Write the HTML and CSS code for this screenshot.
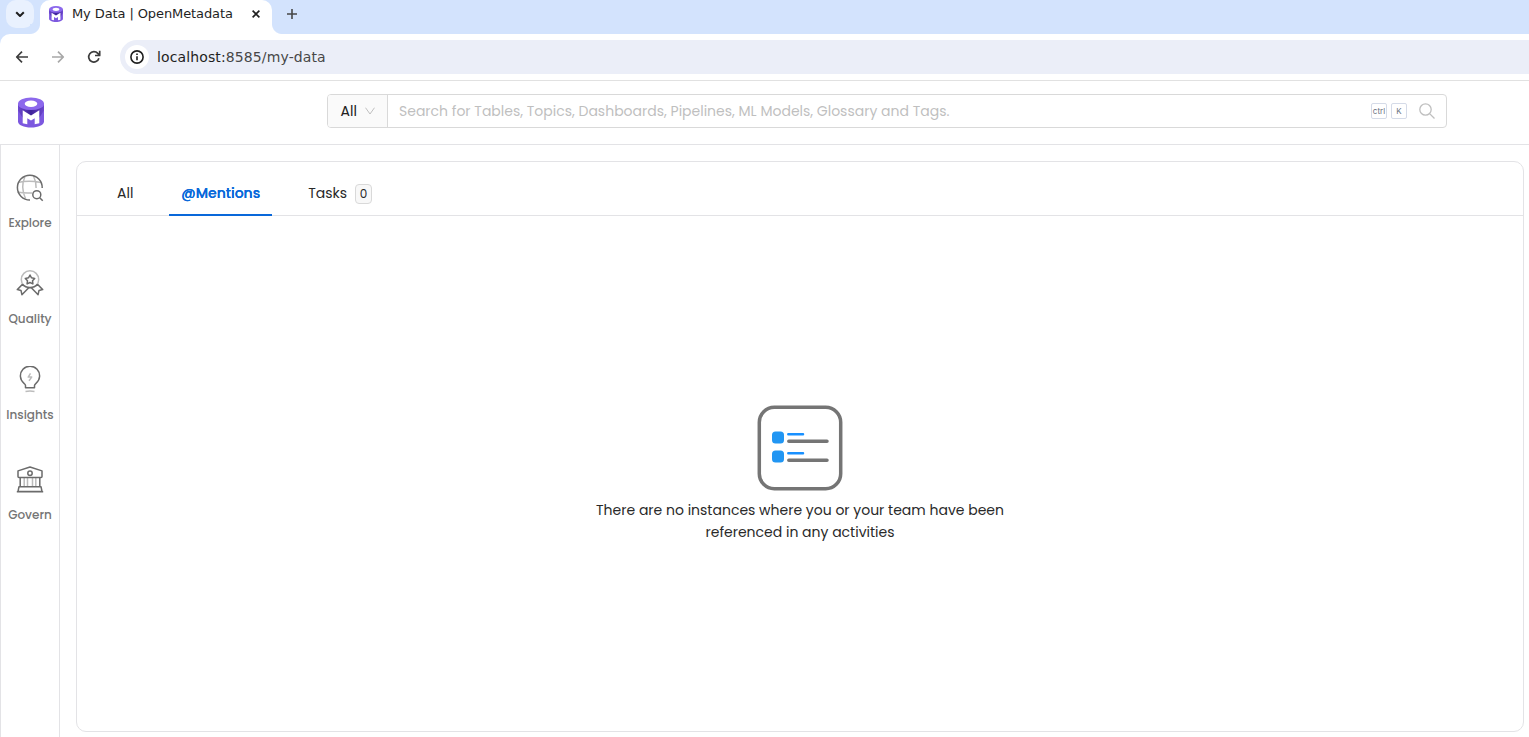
FILE: index.html
```html
<!DOCTYPE html>
<html lang="en">

<head>
    <meta charset="UTF-8">
    <meta name="viewport" content="width=device-width, initial-scale=1.0">
    <title>My Data | OpenMetadata</title>
    <link rel="stylesheet" href="styles.css">
</head>

<body>
    <!-- shared logo -->
    <svg class="defs" width="0" height="0">
        <defs>
            <linearGradient id="logo-side" x1="0" y1="0" x2="1" y2="0">
                <stop offset="0" stop-color="#6d48cf" />
                <stop offset="0.5" stop-color="#3f2299" />
                <stop offset="1" stop-color="#6d48cf" />
            </linearGradient>
            <symbol id="logo" viewBox="0 0 26 30">
                <path d="M0 6v18c0 3.500 5.800 6 13 6s13-2.500 13-6V6z" fill="#7c58df" />
                <path d="M0 8v5l4.500 7h17L26 13V8z" fill="url(#logo-side)" />
                <path d="M4.700 12.800l8.300 5.200 8.300-5.200v13l-4.600 1v-6l-3.700 2.200-3.700-2.200v6l-4.600-1z" fill="#fff" />
                <ellipse cx="13" cy="6.300" rx="13" ry="6.300" fill="#8c68ec" />
                <ellipse cx="13" cy="6.300" rx="6.300" ry="3.200" fill="#fff" />
            </symbol>
        </defs>
    </svg>

    <div class="tab-strip">
        <div class="tab-search">
            <svg width="10" height="7" viewBox="0 0 10 7"><path d="M1.200 1.200L5 5l3.800-3.800" /></svg>
        </div>
        <div class="browser-tab">
            <svg class="favicon" width="14" height="16"><use href="#logo" /></svg>
            <span class="tab-title">My Data | OpenMetadata</span>
            <svg class="tab-close" width="8" height="8" viewBox="0 0 8 8"><path d="M.6.6l6.800 6.800M7.400.6L.6 7.400" /></svg>
        </div>
        <svg class="new-tab" width="10" height="10" viewBox="0 0 10 10"><path d="M5 0v10M0 5h10" /></svg>
    </div>

    <div class="toolbar">
        <svg class="nav-icon" width="14" height="14" viewBox="0 0 14 14"><path d="M13 7H2M7 1.700L1.700 7 7 12.300" /></svg>
        <svg class="nav-icon off" width="14" height="14" viewBox="0 0 14 14"><path d="M1 7h11M7 1.700L12.300 7 7 12.300" /></svg>
        <svg class="nav-icon" width="14" height="14" viewBox="0 0 14 14"><path d="M11.900 8.200A5.200 5.200 0 1 1 10.800 3.400L12.700 5.300M12.700.8v4.700H8" /></svg>
        <div class="address">
            <span class="site-info">
                <svg width="14" height="14" viewBox="0 0 14 14"><circle cx="7" cy="7" r="6.100" /><path d="M7 6.300V10.300M7 3.500V5" /></svg>
            </span>
            <span class="url"><b>localhost:</b>8585/my-data</span>
        </div>
    </div>

    <header class="header">
        <svg class="brand" width="26" height="31"><use href="#logo" /></svg>
        <div class="search">
            <div class="search-type">
                <span>All</span>
                <svg width="10" height="8" viewBox="0 0 10 8"><path d="M.5.7L5 7 9.500.7" /></svg>
            </div>
            <span class="placeholder">Search for Tables, Topics, Dashboards, Pipelines, ML Models, Glossary and Tags.</span>
            <kbd>ctrl</kbd>
            <kbd>K</kbd>
            <svg class="search-icon" width="16" height="16" viewBox="0 0 16 16"><circle cx="6.500" cy="6.500" r="5.700" /><path d="M10.600 10.600l4.900 4.900" /></svg>
        </div>
    </header>

    <div class="main">
        <nav class="sidebar">
            <a class="side-item">
                <svg width="28" height="28" viewBox="0 0 28 28">
                    <g class="light"><path d="M9 2.500C6 9 6 17 9.500 24.500M17.500 2c2 4 2.700 8 2.600 12M2 8.500c7-1.700 15-1.700 23 0M1.500 18c4 1 9 1.300 14.500 1" /></g>
                    <path d="M14 26A12.400 12.400 0 1 1 26.200 14" />
                    <circle cx="20.800" cy="20.700" r="4" /><path d="M23.700 23.700l3 3" />
                </svg>
                <span>Explore</span>
            </a>
            <a class="side-item">
                <svg width="28" height="28" viewBox="0 0 28 28">
                    <circle class="light" cx="14" cy="9.500" r="8.700" />
                    <path d="M14 5l1.500 2.800 3.200.6-2.200 2.300.4 3.200-2.900-1.400-2.900 1.400.4-3.200-2.200-2.300 3.200-.6z" />
                    <path d="M6.500 14.300l-5.200 5.300 3.700.8.900 4.300 6.600-6.800M21.500 14.300l5.200 5.300-3.700.8-.9 4.300-6.800-6.900M6.500 14.300c2 2.400 4.500 3.200 7.500 3.200s5.500-.8 7.500-3.200" />
                </svg>
                <span>Quality</span>
            </a>
            <a class="side-item">
                <svg width="28" height="28" viewBox="0 0 28 28">
                    <path d="M9.500 21.700v-2.200c0-1-.6-1.500-1.500-2.200A9.600 9.600 0 1 1 20 17.300c-.9.700-1.500 1.200-1.500 2.200v2.200z" />
                    <path class="light" d="M14.500 7.300l-2.300 3.800h3.500L13 14.800M9.500 25.400q4.500-1 9 0" />
                </svg>
                <span>Insights</span>
            </a>
            <a class="side-item">
                <svg width="28" height="28" viewBox="0 0 28 28">
                    <path class="light" d="M8.200 12v8.500M11.500 12v8.500M16.500 12v8.500M19.800 12v8.500" />
                    <path d="M14 1l12 3.900v5.600q0 1-1 1H3q-1 0-1-1V4.900zM4.200 12v8.500M23.800 12v8.500M3 20.700h22l1 4.800H2zM.8 25.700h26.400" />
                    <circle cx="14" cy="7.200" r="2.200" />
                </svg>
                <span>Govern</span>
            </a>
        </nav>

        <div class="feed">
            <div class="tabs">
                <div class="tab">All</div>
                <div class="tab active">@Mentions</div>
                <div class="tab">Tasks<span class="count">0</span></div>
            </div>
            <div class="empty">
                <svg width="86" height="86" viewBox="0 0 86 86">
                    <rect x="2.300" y="2.300" width="81.400" height="81.400" rx="15" fill="none" stroke="#757575" stroke-width="3.500" />
                    <rect x="15" y="26.500" width="12" height="12" rx="3.500" fill="#2196f3" />
                    <rect x="15" y="45.500" width="12" height="12" rx="3.500" fill="#2196f3" />
                    <path d="M31.300 29.300H46M31.300 48.300H46" stroke="#1890ff" stroke-width="2.500" stroke-linecap="round" />
                    <path d="M31.800 36.200H70M31.800 55.200H70" stroke="#757575" stroke-width="3.500" stroke-linecap="round" />
                </svg>
                <p>There are no instances where you or your team have been</p>
                <p>referenced in any activities</p>
            </div>
        </div>
    </div>
</body>

</html>
```
FILE: styles.css
```css
* {
    box-sizing: border-box;
    margin: 0;
    padding: 0;
}

body {
    display: flex;
    flex-direction: column;
    height: 737px;
    overflow: hidden;
    background: #fff;
    color: #292929;
    font-family: Poppins, Inter, sans-serif;
    font-size: 14px;
}

svg {
    display: block;
    flex: none;
    fill: none;
    stroke-linejoin: round;
}

span,
p {
    white-space: nowrap;
}

.defs {
    position: absolute;
}

/* browser window */
.tab-strip {
    display: flex;
    align-items: flex-start;
    height: 34px;
    padding-left: 6px;
    background: #d3e3fd;
    font-family: "DejaVu Sans", sans-serif;
}

.tab-search {
    display: flex;
    align-items: center;
    justify-content: center;
    width: 28px;
    height: 28px;
    border-radius: 10px;
    background: #e9f1fe;
}

.tab-search svg {
    stroke: #1f1f1f;
    stroke-width: 2;
}

.browser-tab {
    position: relative;
    display: flex;
    align-items: center;
    width: 232px;
    height: 34px;
    margin-left: 6px;
    padding: 0 12px 6px 9px;
    border-radius: 10px 10px 0 0;
    background: #fff;
}

/* curved feet of the active tab */
.browser-tab::before,
.browser-tab::after {
    content: "";
    position: absolute;
    bottom: 0;
    width: 10px;
    height: 10px;
}

.browser-tab::before {
    left: -10px;
    background: radial-gradient(circle at 0 0, #d3e3fd 9.5px, #fff 10.5px);
}

.browser-tab::after {
    right: -10px;
    background: radial-gradient(circle at 100% 0, #d3e3fd 9.5px, #fff 10.5px);
}

.tab-title {
    width: 171px;
    margin-left: 9px;
    padding-bottom: 1px;
    color: #1f1f1f;
    font-size: 13px;
    letter-spacing: -0.1px;
}

.tab-close {
    margin-left: auto;
    stroke: #1f1f1f;
    stroke-width: 1.6;
}

.new-tab {
    margin: 9px 0 0 15px;
    stroke: #474747;
    stroke-width: 1.6;
}

.toolbar {
    position: relative;
    display: flex;
    align-items: center;
    gap: 22px;
    height: 47px;
    padding-left: 15px;
    border-bottom: 1px solid #e1e1e1;
    background: linear-gradient(#d3e3fd, #d3e3fd) 0 0 / 10px 10px no-repeat;
}

.toolbar::before {
    content: "";
    position: absolute;
    left: 0;
    top: 0;
    width: 10px;
    height: 10px;
    border-top-left-radius: 10px;
    background: #fff;
}

.nav-icon {
    stroke: #3c3c3c;
    stroke-width: 1.7;
}

.nav-icon.off {
    stroke: #a8a8a8;
}

.address {
    display: flex;
    align-items: center;
    flex: 1;
    height: 34px;
    margin-left: -3px;
    padding-left: 5px;
    border-radius: 17px 0 0 17px;
    background: #ebeef8;
    font-family: "DejaVu Sans", sans-serif;
}

.site-info {
    display: flex;
    align-items: center;
    justify-content: center;
    width: 24px;
    height: 24px;
    border-radius: 50%;
    background: #fff;
}

.site-info svg {
    stroke: #1f1f1f;
    stroke-width: 1.6;
}

.url {
    margin-left: 8px;
    color: #474747;
    font-size: 14px;
    letter-spacing: 0.12px;
}

.url b {
    color: #1f1f1f;
    font-weight: 400;
}

/* app header */
.header {
    display: flex;
    height: 64px;
    padding-left: 18px;
    border-bottom: 1px solid #e3e3e6;
}

.brand {
    margin-top: 16px;
}

.search {
    display: flex;
    align-items: center;
    width: 1120px;
    height: 34px;
    margin: 13px 0 0 283px;
    padding-right: 11px;
    border: 1px solid #d9d9d9;
    border-radius: 4px;
}

.search-type {
    display: flex;
    align-items: center;
    gap: 8px;
    width: 60px;
    height: 32px;
    padding-left: 12.5px;
    border-right: 1px solid #d9d9d9;
    border-radius: 3px 0 0 3px;
    background: #fafafa;
    color: #222;
}

.search-type svg {
    stroke: #bfbfbf;
}

.placeholder {
    flex: 1;
    margin-left: 11px;
    color: #bfbfbf;
}

kbd {
    width: 16px;
    height: 16px;
    margin-right: 4px;
    border: 1px solid #d5dbe8;
    border-radius: 2px;
    color: #6b7280;
    font-family: Inter, sans-serif;
    font-size: 8px;
    line-height: 14px;
    text-align: center;
}

.search-icon {
    margin-left: 8px;
    stroke: #bfbfbf;
    stroke-width: 1.3;
}

/* content */
.main {
    display: flex;
    flex: 1;
}

.sidebar {
    display: flex;
    flex-direction: column;
    width: 60px;
    padding-top: 29px;
    border: solid #e3e3e6;
    border-width: 0 1px;
}

.side-item {
    display: flex;
    flex-direction: column;
    align-items: center;
    gap: 12px;
    height: 96px;
    color: #757575;
    font-size: 12px;
    font-weight: 500;
    line-height: 18px;
}

.side-item:last-child {
    margin-top: 4px;
}

.side-item svg {
    stroke: #6b6b6b;
    stroke-width: 1.5;
}

.side-item .light {
    stroke: #bcbcbc;
}

.feed {
    display: flex;
    flex-direction: column;
    width: 1448px;
    height: 571px;
    margin: 16px 0 0 16px;
    border: 1px solid #e3e3e6;
    border-radius: 10px;
}

.tabs {
    display: flex;
    gap: 24px;
    height: 54px;
    padding-left: 28px;
    border-bottom: 1px solid #e3e3e6;
}

.tab {
    display: flex;
    align-items: center;
    height: 54px;
    padding: 10px 12px 0;
    border-bottom: 2px solid transparent;
}

.tab.active {
    border-bottom-color: #0968da;
    color: #0968da;
    font-weight: 500;
    text-shadow: 0 0 0.25px currentcolor;
}

.count {
    width: 17px;
    height: 20px;
    margin: 2px 0 0 8px;
    border: 1px solid #d9d9d9;
    border-radius: 4px;
    background: #f8f8f8;
    font-size: 12px;
    line-height: 18px;
    text-align: center;
}

.empty {
    display: flex;
    flex-direction: column;
    align-items: center;
    padding-top: 189px;
    line-height: 22px;
}

.empty svg {
    margin-bottom: 8px;
}
```
